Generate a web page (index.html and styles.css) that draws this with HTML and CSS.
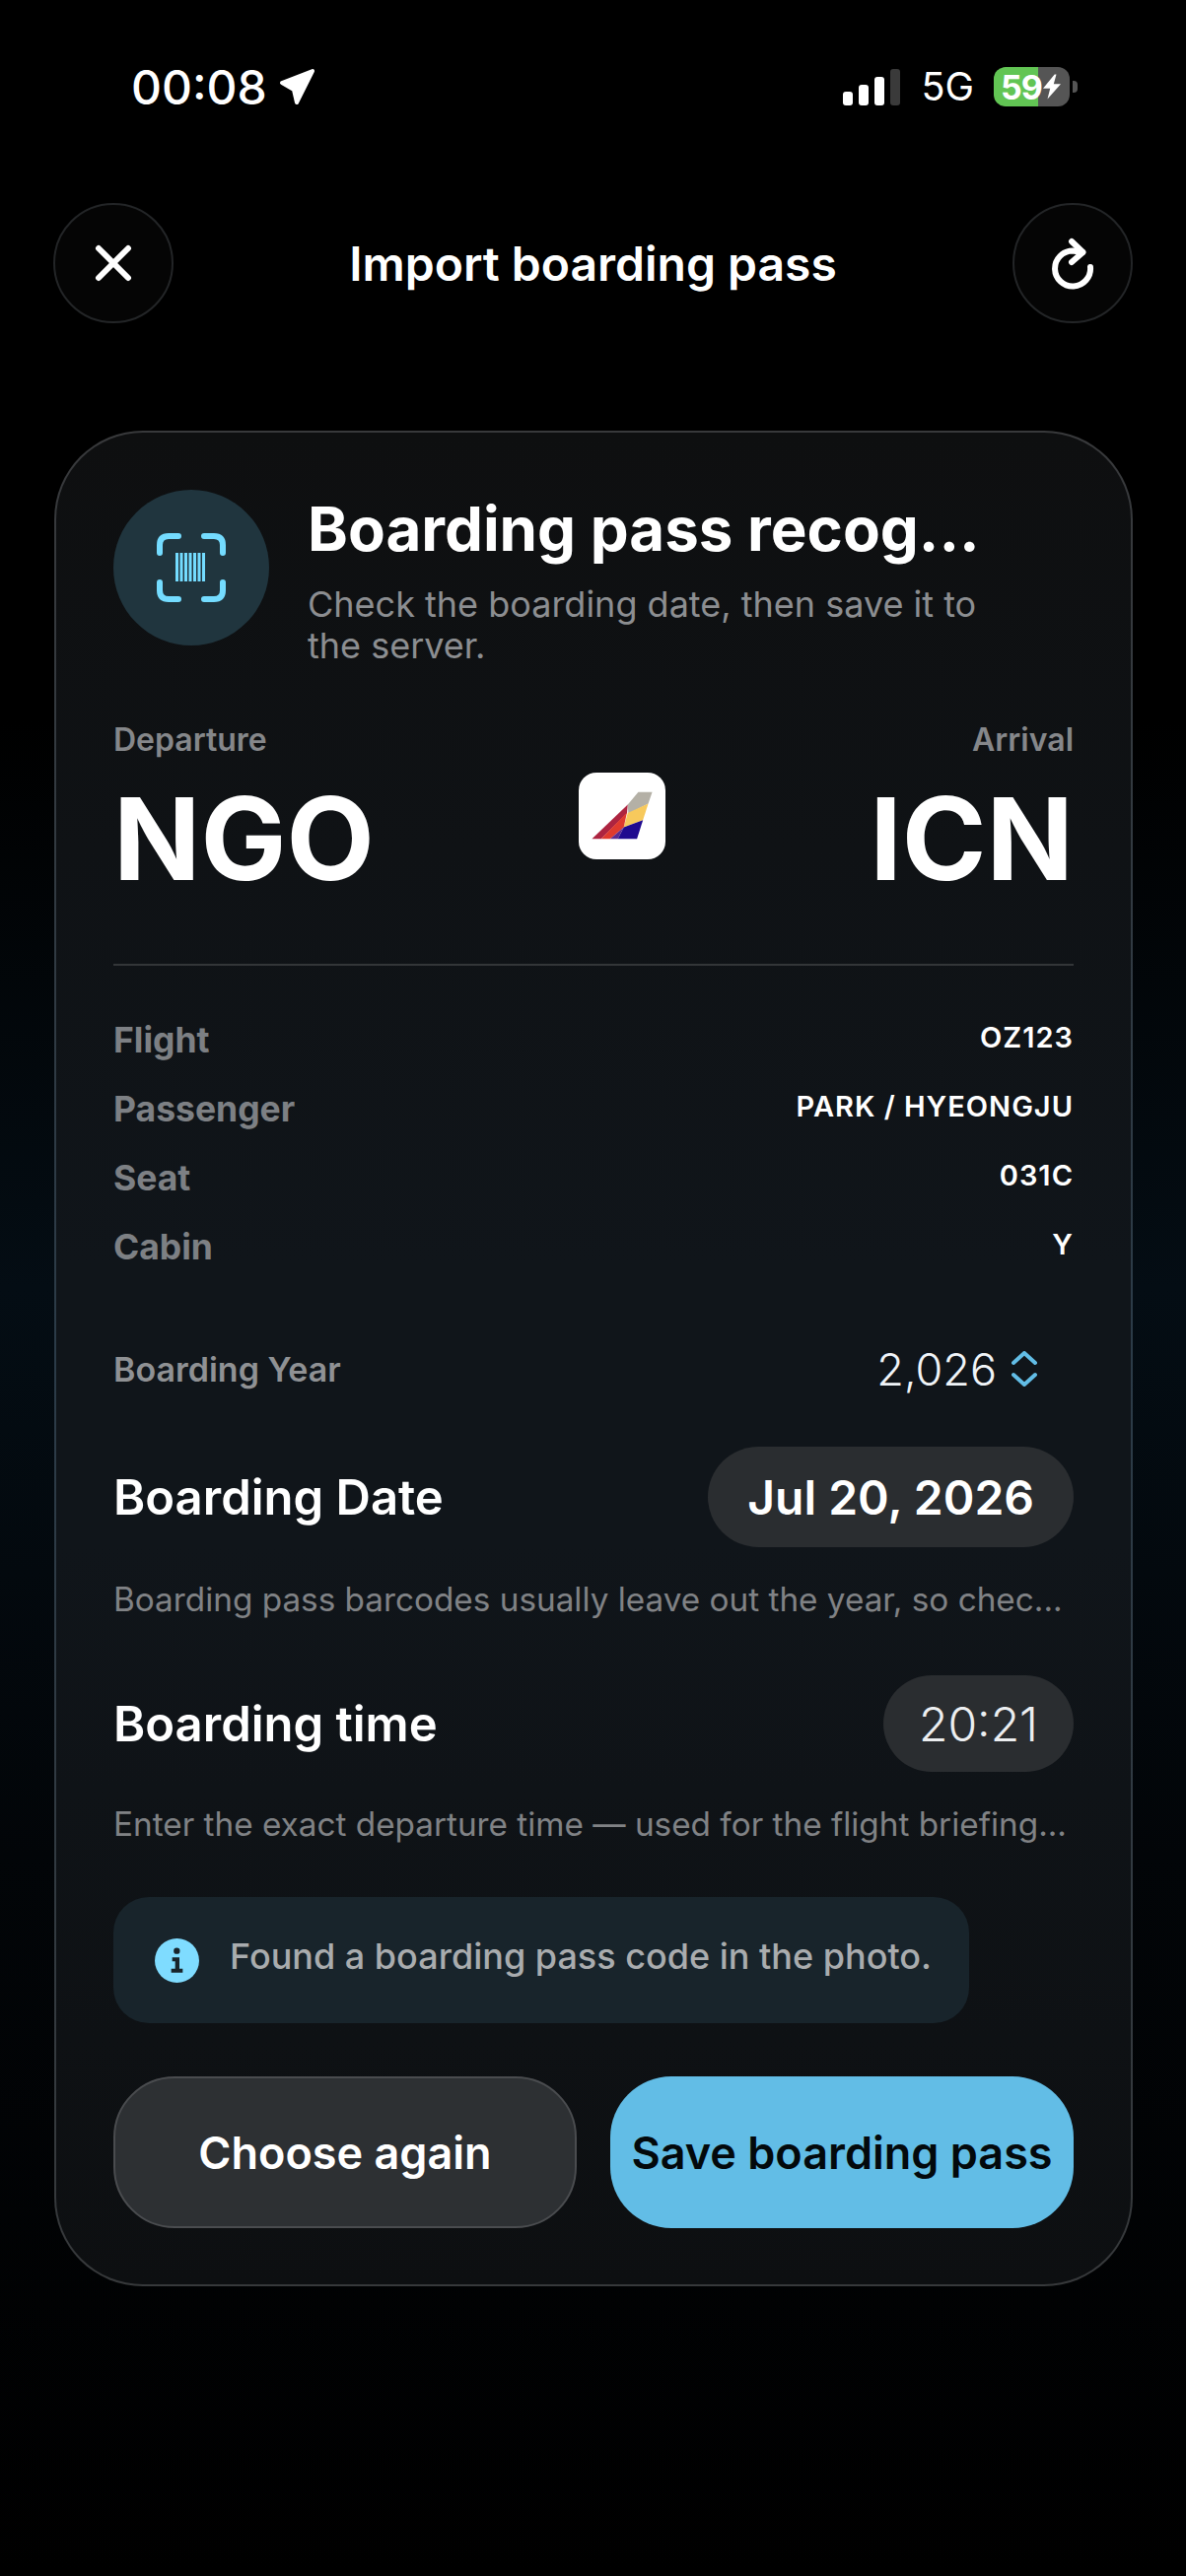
FILE: index.html
```html
<!DOCTYPE html>
<html lang="en">
  <head>
    <meta charset="UTF-8" />
    <meta name="viewport" content="width=device-width, initial-scale=1.0" />
    <title>Import boarding pass</title>
    <link rel="stylesheet" href="styles.css">
  </head>

  <body>
    <!-- Status bar -->
    <div class="status-bar">
      <div class="status-left">
        <span class="clock">00:08</span>
        <svg class="location" viewBox="0 0 38 38"><path d="M4 15 35 3 19 35 16 22Z" /></svg>
      </div>
      <div class="status-right">
        <div class="signal">
          <span class="bar bar-1"></span>
          <span class="bar bar-2"></span>
          <span class="bar bar-3"></span>
          <span class="bar bar-4"></span>
        </div>
        <span class="network">5G</span>
        <div class="battery">
          <span class="battery-text">59</span>
          <svg class="bolt" viewBox="0 0 20 28"><path d="M13 0 0 16h8L5 28 20 11h-8l3-11Z" /></svg>
        </div>
        <span class="battery-cap"></span>
      </div>
    </div>

    <!-- Nav row -->
    <div class="nav">
      <button class="round-btn">
        <svg width="44" height="44" viewBox="0 0 44 44"><path d="M7 7 37 37M37 7 7 37" /></svg>
      </button>
      <h1>Import boarding pass</h1>
      <button class="round-btn">
        <svg width="50" height="54" viewBox="0 0 50 54"><path d="M43 31A18 18 0 1 1 25 14.500L35 16" /><path d="M24 5 35.500 16 24 26" /></svg>
      </button>
    </div>

    <!-- Card -->
    <div class="card">
      <div class="card-head">
        <div class="scan-circle">
          <svg width="70" height="70" viewBox="0 0 70 70">
            <path class="scan-corner" d="M3 20V12Q3 3 12 3H22M48 3H58Q67 3 67 12V20M3 50V58Q3 67 12 67H22M48 67H58Q67 67 67 58V50" />
            <path class="scan-bars" d="M20.500 20V49M25 20V49M29.500 20V49M34 20V49M38.500 20V49M43 20V49M47.500 20V49" />
          </svg>
        </div>
        <div class="head-text">
          <h2>Boarding pass recog...</h2>
          <p>Check the boarding date, then save it to the server.</p>
        </div>
      </div>

      <div class="route">
        <div class="airport">
          <span class="route-label">Departure</span>
          <span class="code">NGO</span>
        </div>
        <div class="airline-logo">
          <svg width="88" height="88" viewBox="40 28 262 262">
            <path fill="#b4b0a6" d="M188 125 220 87H262L250 122 190 152Z" />
            <path fill="#f7c95c" d="M188 150 250 122 234 172 176 193Z" />
            <path fill="#1f0a8f" d="M176 193 234 172 216 228H158Z" />
            <path fill="#ad2440" d="M80 228 188 125 186 150 108 228Z" />
            <path fill="#df3a2e" d="M108 228 186 148 176 193 135 228Z" />
            <path fill="#5a2a90" d="M135 228 176 193 158 228Z" />
          </svg>
        </div>
        <div class="airport airport-right">
          <span class="route-label">Arrival</span>
          <span class="code">ICN</span>
        </div>
      </div>

      <div class="divider"></div>

      <div class="info-row"><span class="info-label">Flight</span><span class="info-value">OZ123</span></div>
      <div class="info-row"><span class="info-label">Passenger</span><span class="info-value">PARK / HYEONGJU</span></div>
      <div class="info-row"><span class="info-label">Seat</span><span class="info-value">031C</span></div>
      <div class="info-row"><span class="info-label">Cabin</span><span class="info-value">Y</span></div>

      <div class="year-row">
        <span class="year-label">Boarding Year</span>
        <div class="year-picker">
          <span>2,026</span>
          <svg width="26" height="36" viewBox="0 0 26 36"><path d="M2 12 13 2 24 12M2 24 13 34 24 24" /></svg>
        </div>
      </div>

      <div class="field-row date-row">
        <span class="field-label">Boarding Date</span>
        <span class="date-pill">Jul 20, 2026</span>
      </div>
      <p class="help">Boarding pass barcodes usually leave out the year, so chec...</p>

      <div class="field-row time-row">
        <span class="field-label">Boarding time</span>
        <span class="time-pill">20:21</span>
      </div>
      <p class="help">Enter the exact departure time — used for the flight briefing...</p>

      <div class="notice">
        <svg width="45" height="45" viewBox="50 48 135 135">
          <circle cx="117.500" cy="115.500" r="67.500" fill="#7fdcff" />
          <circle cx="117" cy="86" r="9.500" fill="#18242b" />
          <path fill="#18242b" d="M103 106H125V140H135V152H100V140H112V118H103Z" />
        </svg>
        <span>Found a boarding pass code in the photo.</span>
      </div>

      <div class="actions">
        <button class="btn btn-dark">Choose again</button>
        <button class="btn btn-blue">Save boarding pass</button>
      </div>
    </div>
  </body>
</html>
```

FILE: styles.css
```css
* {
  box-sizing: border-box;
}

html,
body {
  margin: 0;
  height: 2614px;
  overflow: hidden;
}

body {
  background: linear-gradient(180deg, #000 28%, #040d14 50%, #020508 72%, #000 100%);
  color: #fff;
  font-family: Inter, "Liberation Sans", sans-serif;
}

/* Status bar */
.status-bar {
  display: flex;
  justify-content: space-between;
  align-items: center;
  height: 44px;
  margin-top: 66px;
  padding: 0 110px 0 133px;
}

.status-left,
.status-right {
  display: flex;
  align-items: center;
}

.clock {
  font-size: 48px;
  font-weight: 500;
}

.location {
  width: 38px;
  height: 38px;
  margin-left: 11px;
  fill: #fff;
  stroke: #fff;
  stroke-width: 4;
  stroke-linejoin: round;
}

.signal {
  display: flex;
  align-items: flex-end;
  gap: 6px;
  height: 37px;
}

.bar {
  width: 10px;
  border-radius: 3px;
  background: #fff;
}

.bar-1 { height: 14px; }
.bar-2 { height: 21px; }
.bar-3 { height: 29px; }
.bar-4 { height: 37px; background: #3a3a3a; }

.network {
  margin-left: 22px;
  font-size: 39.500px;
  font-weight: 400;
}

.battery {
  display: flex;
  align-items: center;
  width: 77px;
  height: 40px;
  margin-left: 20px;
  padding-left: 7px;
  border-radius: 12px;
  background: linear-gradient(90deg, #62c554 0 58%, #555 58%);
}

.battery-text {
  font-size: 34px;
  font-weight: 700;
  letter-spacing: -1px;
}

.bolt {
  flex: none;
  width: 18px;
  height: 26px;
  margin-left: 1px;
  fill: #fff;
}

.battery-cap {
  width: 5px;
  height: 12px;
  margin-left: 3px;
  border-radius: 0 4px 4px 0;
  background: #555;
}

/* Nav */
.nav {
  display: flex;
  justify-content: space-between;
  align-items: center;
  margin-top: 96px;
  padding: 0 54px;
}

.nav h1 {
  margin: 0;
  font-size: 48px;
  font-weight: 600;
}

.round-btn {
  display: flex;
  align-items: center;
  justify-content: center;
  width: 122px;
  height: 122px;
  padding: 0;
  border: 2px solid #232527;
  border-radius: 50%;
  background: #050505;
}

.round-btn svg {
  fill: none;
  stroke: #fff;
  stroke-width: 6;
  stroke-linecap: round;
  stroke-linejoin: round;
}

/* Card */
.card {
  width: 1094px;
  height: 1883px;
  margin: 109px 0 0 55px;
  padding: 58px 58px 0;
  border: 2px solid transparent;
  border-radius: 90px;
  background:
    linear-gradient(180deg, #0e0f10 0%, #10151a 45%, #10151a 60%, #0d0f11 100%) padding-box,
    linear-gradient(180deg, #38393b 0%, #2b3b48 50%, #37393b 100%) border-box;
}

.card-head {
  display: flex;
  gap: 39px;
}

.scan-circle {
  display: flex;
  flex: none;
  align-items: center;
  justify-content: center;
  width: 158px;
  height: 158px;
  border-radius: 50%;
  background: #20353e;
}

.scan-corner {
  fill: none;
  stroke: #74dcff;
  stroke-width: 6;
  stroke-linecap: round;
}

.scan-bars {
  fill: none;
  stroke: #74dcff;
  stroke-width: 3;
}

.head-text {
  width: 700px;
}

.head-text h2 {
  margin: 2px 0 0;
  font-size: 61.800px;
  line-height: 75px;
  font-weight: 700;
  white-space: nowrap;
}

.head-text p {
  margin: 18px 0 0;
  color: #8c8e91;
  font-size: 36px;
  line-height: 42px;
}

/* Route */
.route {
  display: flex;
  justify-content: space-between;
  margin-top: 57px;
}

.airport {
  display: flex;
  flex-direction: column;
}

.airport-right {
  align-items: flex-end;
}

.route-label {
  color: #85878a;
  font-size: 32px;
  line-height: 36px;
  font-weight: 600;
}

.code {
  margin-top: 22px;
  font-size: 116px;
  line-height: 120px;
  font-weight: 700;
}

.airline-logo {
  width: 88px;
  height: 88px;
  margin-top: 51px;
  border-radius: 18px;
  background: #fff;
}

.divider {
  height: 2px;
  margin-top: 67px;
  background: #333638;
}

/* Detail rows */
.info-row {
  display: flex;
  justify-content: space-between;
  align-items: center;
  height: 70px;
}

.divider + .info-row {
  margin-top: 40px;
}

.info-label {
  color: #7d8084;
  font-size: 35.500px;
  font-weight: 700;
}

.info-value {
  padding-bottom: 5px;
  font-size: 29px;
  font-weight: 600;
  letter-spacing: 1px;
}

.year-row {
  display: flex;
  justify-content: space-between;
  align-items: center;
  height: 70px;
  margin-top: 54px;
}

.year-label {
  color: #8f9194;
  font-size: 34px;
  font-weight: 600;
}

.year-picker {
  display: flex;
  align-items: center;
  gap: 15px;
  padding-right: 37px;
  color: #f0f4f8;
  font-size: 45px;
  font-weight: 300;
}

.year-picker svg {
  fill: none;
  stroke: #62bde6;
  stroke-width: 4;
  stroke-linecap: round;
  stroke-linejoin: round;
}

.field-row {
  display: flex;
  justify-content: space-between;
  align-items: center;
}

.date-row {
  margin-top: 44px;
}

.time-row {
  margin-top: 55px;
}

.field-label {
  font-size: 49px;
  font-weight: 600;
}

.date-pill,
.time-pill {
  display: flex;
  align-items: center;
  border-radius: 52px;
  background: #2a2d30;
}

.date-pill {
  height: 102px;
  padding: 0 40px;
  font-size: 48px;
  font-weight: 600;
}

.time-pill {
  height: 98px;
  padding: 0 36px;
  color: #eceef0;
  font-size: 48px;
  font-weight: 300;
}

.help {
  margin: 31px 0 0;
  color: #808285;
  font-size: 33.300px;
  line-height: 44px;
  white-space: nowrap;
}

/* Info banner */
.notice {
  display: flex;
  align-items: center;
  gap: 31px;
  width: 868px;
  height: 128px;
  margin-top: 52px;
  padding: 0 42px;
  border-radius: 36px;
  background: #18242b;
  color: #a9acae;
  font-size: 36px;
  font-weight: 500;
  white-space: nowrap;
}

.notice svg {
  flex: none;
}

.notice span {
  padding-bottom: 8px;
}

/* Buttons */
.actions {
  display: flex;
  justify-content: space-between;
  margin-top: 54px;
}

.btn {
  width: 470px;
  height: 154px;
  border-radius: 62px;
  font-family: inherit;
  font-size: 45px;
  font-weight: 600;
  white-space: nowrap;
}

.btn-dark {
  border: 2px solid #4a4c4f;
  background: #2d3033;
  color: #fff;
}

.btn-blue {
  padding: 0;
  border: none;
  background: #62bde6;
  color: #03090c;
}
```
